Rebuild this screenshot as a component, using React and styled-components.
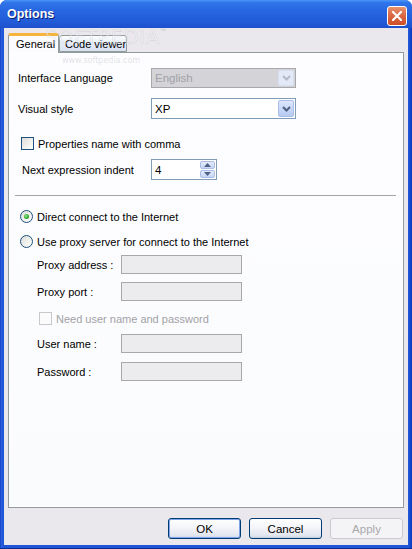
import React from "react";
import styled, { createGlobalStyle } from "styled-components";

// ------------- GLOBAL -------------
const GlobalStyle = createGlobalStyle`
  html, body {
    margin: 0;
    padding: 0;
    background: #ffffff;
  }
  body {
    font-family: "Liberation Sans", Arial, sans-serif;
    font-size: 11px;
    color: #000;
  }
`;

// ------------- SMALL DRAWINGS -------------
const Chevron = ({ color }) => (
  <svg width="9" height="6" viewBox="0 0 9 6">
    <polyline points="1,1 4.5,4.5 8,1" fill="none" stroke={color} strokeWidth="2" />
  </svg>
);

const Triangle = ({ up }) => (
  <svg width="7" height="4" viewBox="0 0 7 4">
    <polygon points={up ? "0,4 3.5,0 7,4" : "0,0 3.5,4 7,0"} fill="#4D6185" />
  </svg>
);

const CloseGlyph = () => (
  <svg width="10" height="10" viewBox="0 0 10 10">
    <path d="M1 1 L9 9 M9 1 L1 9" stroke="#fff" strokeWidth="2.2" strokeLinecap="square" />
  </svg>
);

// ------------- PIECES -------------
const ComboBox = ({ value, disabled }) => (
  <Combo $disabled={disabled}>
    <ComboText $disabled={disabled}>{value}</ComboText>
    <ComboButton $disabled={disabled}>
      <Chevron color={disabled ? "#B3BAC8" : "#4D6185"} />
    </ComboButton>
  </Combo>
);

const Field = ({ label, indent, labelWidth, top, height, children }) => (
  <FieldRow $indent={indent} $top={top} $h={height}>
    <Label $w={labelWidth}>{label}</Label>
    {children}
  </FieldRow>
);

const App = () => {
  return (
    <>
      <GlobalStyle />
      <Window>
        <TitleBar>
          <Title>Options</Title>
          <CloseButton>
            <CloseGlyph />
          </CloseButton>
        </TitleBar>

        <Client>
          <TabStrip>
            <Tab $active>General</Tab>
            <Tab>Code viewer</Tab>
          </TabStrip>

          <Panel>
            <Field label="Interface Language" indent={9} labelWidth={133} top={15} height={20}>
              <ComboBox value="English" disabled />
            </Field>

            <Field label="Visual style" indent={9} labelWidth={133} top={10} height={21}>
              <ComboBox value="XP" />
            </Field>

            <CheckRow $indent={12} $top={18}>
              <CheckBox />
              <span>Properties name with comma</span>
            </CheckRow>

            <Field label="Next expression indent" indent={13} labelWidth={129} top={9} height={21}>
              <SpinEdit>
                <SpinText>4</SpinText>
                <SpinButtons>
                  <SpinButton><Triangle up /></SpinButton>
                  <SpinButton><Triangle /></SpinButton>
                </SpinButtons>
              </SpinEdit>
            </Field>

            <Separator />

            <CheckRow $indent={11} $top={14}>
              <Radio $checked />
              <span>Direct connect to the Internet</span>
            </CheckRow>

            <CheckRow $indent={11} $top={12}>
              <Radio />
              <span>Use proxy server for connect to the Internet</span>
            </CheckRow>

            <Field label="Proxy address :" indent={28} labelWidth={84} top={7} height={19}>
              <TextBox />
            </Field>

            <Field label="Proxy port :" indent={28} labelWidth={84} top={8} height={19}>
              <TextBox />
            </Field>

            <CheckRow $indent={30} $top={11} $disabled>
              <CheckBox $disabled />
              <span>Need user name and password</span>
            </CheckRow>

            <Field label="User name :" indent={28} labelWidth={84} top={9} height={19}>
              <TextBox />
            </Field>

            <Field label="Password :" indent={28} labelWidth={84} top={9} height={19}>
              <TextBox />
            </Field>
          </Panel>

          <ButtonBar>
            <Button $default>OK</Button>
            <Button>Cancel</Button>
            <Button disabled>Apply</Button>
          </ButtonBar>
        </Client>

        {/* watermark that sits over the dialog */}
        <Watermark>SOFTPEDIA<sup>™</sup></Watermark>
        <WatermarkUrl>www.softpedia.com</WatermarkUrl>
      </Window>
    </>
  );
};

//--------------------------------- STYLES ---------------------------------
const Window = styled.div`
  position: relative;
  width: 412px;
  height: 549px;
  display: flex;
  flex-direction: column;
  background: linear-gradient(to right, #0B33B8 0px, #2A62DE 1px, #1F56D6 3px, #1F56D6 409px, #0D3DC4 411px);
  border-radius: 7px 7px 0 0;
  overflow: hidden;
  box-shadow: inset 0 -1px 0 #0A2A98;
`;

const TitleBar = styled.div`
  height: 28px;
  display: flex;
  align-items: center;
  justify-content: space-between;
  padding: 0 5px 0 7px;
  background: linear-gradient(
    to bottom,
    #4A96F8 0%,
    #2F74EA 10%,
    #2765E0 40%,
    #225CD9 75%,
    #1D50CC 100%
  );
  box-sizing: border-box;
`;

const Title = styled.h1`
  margin: 0;
  font-family: "Liberation Sans", Arial, sans-serif;
  font-size: 12.5px;
  font-weight: 700;
  color: #fff;
  text-shadow: 1px 1px 0 #0A1E72;
`;

const CloseButton = styled.div`
  width: 20px;
  height: 20px;
  box-sizing: border-box;
  border: 1px solid #ffffff;
  border-radius: 3px;
  display: flex;
  align-items: center;
  justify-content: center;
  background: linear-gradient(to bottom, #E9926F 0%, #DB6A45 45%, #CC4E28 100%);
  margin-top: 3px;
`;

const Client = styled.div`
  flex: 1;
  margin: 0 4px 4px 4px;
  padding: 5px 4px 0 4px;
  background: #EAE8ED;
  display: flex;
  flex-direction: column;
`;

const TabStrip = styled.div`
  height: 19px;
  display: flex;
  align-items: flex-end;
  position: relative;
  z-index: 2;
`;

const Tab = styled.div`
  box-sizing: border-box;
  height: ${(p) => (p.$active ? "20px" : "17px")};
  margin-bottom: ${(p) => (p.$active ? "-1px" : "0")};
  width: ${(p) => (p.$active ? "51px" : "68px")};
  padding: ${(p) => (p.$active ? "2px 0 0 7px" : "2px 0 0 5px")};
  border: 1px solid #919B9C;
  border-bottom: ${(p) => (p.$active ? "none" : "1px solid #919B9C")};
  border-top: ${(p) => (p.$active ? "3px solid #F6B43C" : "1px solid #919B9C")};
  border-radius: 3px 3px 0 0;
  background: ${(p) =>
    p.$active ? "#FCFCFE" : "linear-gradient(to bottom, #FFFFFF 0%, #E9EEF8 40%, #D8E0F0 100%)"};
  font-size: 11px;
  white-space: nowrap;
`;

const Panel = styled.div`
  height: 456px;
  box-sizing: border-box;
  border: 1px solid #919B9C;
  background: linear-gradient(to bottom, #FDFDFF 0%, #FAFBFD 100%);
  box-shadow: inset 0 0 0 1px #FFFFFF;
  display: flex;
  flex-direction: column;
`;

const FieldRow = styled.div`
  display: flex;
  align-items: center;
  height: ${(p) => p.$h}px;
  margin-top: ${(p) => p.$top}px;
  padding-left: ${(p) => p.$indent}px;
`;

const Label = styled.span`
  width: ${(p) => p.$w}px;
  flex-shrink: 0;
  white-space: nowrap;
`;

const Combo = styled.div`
  width: 145px;
  height: 100%;
  box-sizing: border-box;
  border: 1px solid ${(p) => (p.$disabled ? "#A8A8AC" : "#7F9DB9")};
  background: ${(p) => (p.$disabled ? "#D3D3D8" : "#FFFFFF")};
  display: flex;
  align-items: stretch;
  padding: 1px;
`;

const ComboText = styled.span`
  flex: 1;
  display: flex;
  align-items: center;
  padding-left: 2px;
  font-size: 11.5px;
  color: ${(p) => (p.$disabled ? "#A2A2A6" : "#000")};
`;

const ComboButton = styled.div`
  width: 16px;
  box-sizing: border-box;
  border: 1px solid ${(p) => (p.$disabled ? "#D6DEF0" : "#A9BDE6")};
  border-radius: 2px;
  display: flex;
  align-items: center;
  justify-content: center;
  background: ${(p) =>
    p.$disabled
      ? "#E3E9F6"
      : "linear-gradient(to bottom, #DDE6FB 0%, #C7D6F6 60%, #B6C9F1 100%)"};
`;

const CheckRow = styled.div`
  display: flex;
  align-items: center;
  gap: 4px;
  height: 13px;
  margin-top: ${(p) => p.$top}px;
  padding-left: ${(p) => p.$indent}px;
  color: ${(p) => (p.$disabled ? "#A2A2A6" : "#000")};
  font-size: 11px;
  white-space: nowrap;
`;

const CheckBox = styled.span`
  width: 13px;
  height: 13px;
  box-sizing: border-box;
  flex-shrink: 0;
  border: 1px solid ${(p) => (p.$disabled ? "#C8C8CC" : "#1C5180")};
  background: ${(p) =>
    p.$disabled ? "#FBFBFB" : "linear-gradient(135deg, #DCDCD7 0%, #F2F2EF 60%, #FFFFFF 100%)"};
`;

const Radio = styled.span`
  position: relative;
  width: 13px;
  height: 13px;
  box-sizing: border-box;
  flex-shrink: 0;
  border-radius: 50%;
  border: 1px solid #1C5180;
  background: linear-gradient(135deg, #DCDCD7 0%, #F2F2EF 60%, #FFFFFF 100%);

  &::after {
    content: "";
    display: ${(p) => (p.$checked ? "block" : "none")};
    position: absolute;
    left: 3px;
    top: 3px;
    width: 5px;
    height: 5px;
    border-radius: 50%;
    background: radial-gradient(circle at 40% 40%, #A0E8A0 0%, #34B034 50%, #1E8A1E 100%);
  }
`;

const SpinEdit = styled.div`
  width: 66px;
  height: 100%;
  box-sizing: border-box;
  border: 1px solid #7F9DB9;
  background: #fff;
  display: flex;
  align-items: stretch;
  padding: 1px;
`;

const SpinText = styled.span`
  flex: 1;
  display: flex;
  align-items: center;
  padding-left: 2px;
  font-size: 11.5px;
`;

const SpinButtons = styled.div`
  width: 15px;
  display: flex;
  flex-direction: column;
  gap: 1px;
`;

const SpinButton = styled.div`
  flex: 1;
  box-sizing: border-box;
  border: 1px solid #A9BDE6;
  border-radius: 2px;
  background: linear-gradient(to bottom, #E3EAFB 0%, #C6D5F5 100%);
  display: flex;
  align-items: center;
  justify-content: center;
`;

const Separator = styled.div`
  height: 1px;
  background: #A3A3A8;
  margin: 15px 7px 0 6px;
`;

const TextBox = styled.div`
  width: 121px;
  height: 100%;
  box-sizing: border-box;
  border: 1px solid #A8A8AC;
  background: #ECECEE;
`;

const ButtonBar = styled.div`
  display: flex;
  justify-content: flex-end;
  gap: 8px;
  padding: 10px 1px 0 0;
`;

const Button = styled.button`
  width: 73px;
  height: 21px;
  box-sizing: border-box;
  padding: 0;
  font-family: "Liberation Sans", Arial, sans-serif;
  font-size: 11.5px;
  color: #000;
  border-radius: 3px;
  border: 1px solid #003C74;
  background: linear-gradient(to bottom, #FFFFFF 0%, #F4F5F9 45%, #E2E6F0 85%, #D2D9E8 100%);
  box-shadow: ${(p) => (p.$default ? "inset 0 0 0 1px #7FA4EA" : "inset 0 -1px 0 #C8D0E0")};

  &:disabled {
    color: #A8A8AC;
    border-color: #CACACE;
    background: #F4F4F6;
    box-shadow: none;
  }
`;

const Watermark = styled.div`
  position: absolute;
  left: 45px;
  top: 26px;
  font-family: "DejaVu Sans", sans-serif;
  font-size: 19px;
  letter-spacing: 1px;
  color: rgba(255, 255, 255, 0.35);
  -webkit-text-stroke: 0.6px rgba(170, 170, 180, 0.35);
  pointer-events: none;
  z-index: 5;

  sup {
    font-size: 7px;
    vertical-align: 10px;
  }
`;

const WatermarkUrl = styled.div`
  position: absolute;
  left: 62px;
  top: 56px;
  font-family: "DejaVu Sans", sans-serif;
  font-size: 8px;
  color: rgba(180, 180, 190, 0.4);
  pointer-events: none;
  z-index: 5;
`;

export default App;
